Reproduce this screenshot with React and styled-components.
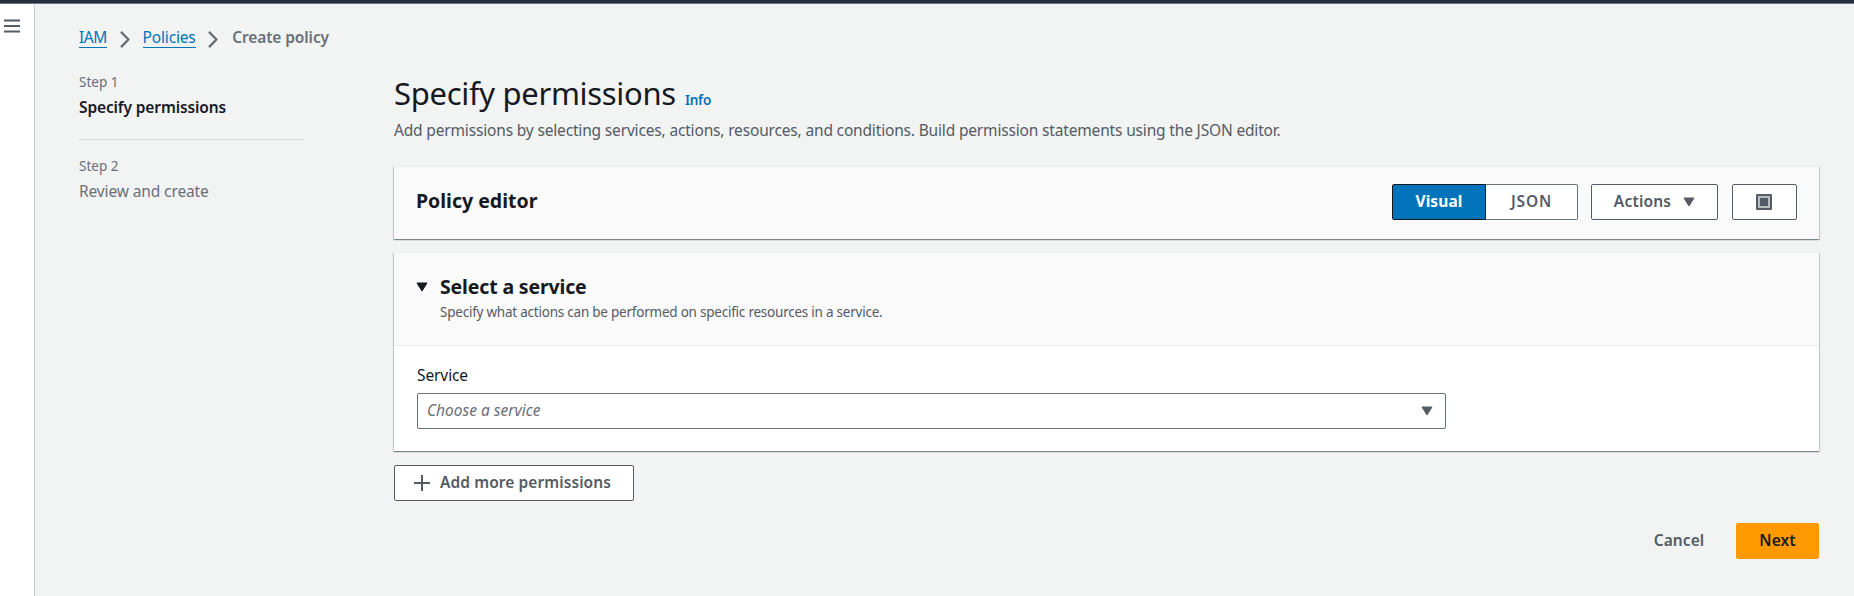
import React from 'react';
import styled, { createGlobalStyle } from 'styled-components';

const GlobalStyle = createGlobalStyle`
  * { box-sizing: border-box; }
  body {
    margin: 0;
    background: #f2f3f3;
    color: #16191f;
    font-family: "Noto Sans", "Open Sans", sans-serif;
    font-size: 15.5px;
    line-height: 22px;
  }
  h1, h2, p, ol { margin: 0; padding: 0; }
  button { font-family: inherit; }
`;

const Page = styled.div`
  display: flex;
  flex-direction: column;
  height: 596px;
  overflow: hidden;
`;

const TopBar = styled.div`
  flex: none;
  height: 4px;
  background: #232f3e;
  border-bottom: 1px solid #6b7681;
`;

const Shell = styled.div`
  flex: 1;
  display: flex;
  min-height: 0;
`;

const NavRail = styled.nav`
  flex: none;
  width: 35px;
  padding: 15px 0 0 4px;
  background: #fff;
  border-right: 1px solid #c3cbcb;
`;

const MenuButton = styled.button`
  display: block;
  width: 16px;
  padding: 0;
  border: 0;
  background: none;
  svg { display: block; }
`;

const Content = styled.div`
  flex: 1;
  display: flex;
  flex-direction: column;
  padding: 23px 35px 0 44px;
`;

const Breadcrumbs = styled.nav`
  display: flex;
  align-items: flex-start;
  height: 21px;
  line-height: 20px;
  svg { flex: none; margin: 4px 13px 0 12.5px; }
`;

const Crumb = styled.a`
  height: 21px;
  color: #0073bb;
  border-bottom: 1px solid #0073bb;
  letter-spacing: ${(p) => p.$spacing};
`;

const CurrentCrumb = styled.span`
  margin-left: 1px;
  color: #687078;
  font-weight: 600;
  letter-spacing: -0.1px;
`;

const Columns = styled.div`
  display: grid;
  grid-template-columns: 225px 1fr;
  column-gap: 90px;
  margin-top: 23px;
`;

const Steps = styled.ol`
  list-style: none;
`;

const Step = styled.li`
  display: flex;
  flex-direction: column;
  gap: 3px;
  & + & {
    margin-top: 21px;
    padding-top: 15px;
    border-top: 1px solid #d5dbdb;
  }
`;

const StepNumber = styled.span`
  color: #687078;
  font-size: 13.5px;
`;

const StepTitle = styled.span`
  color: ${(p) => (p.$active ? '#16191f' : '#687078')};
  font-weight: ${(p) => (p.$active ? 600 : 400)};
  letter-spacing: -0.12px;
`;

const Main = styled.main`
  display: flex;
  flex-direction: column;
  gap: 14px;
`;

const PageHeader = styled.header`
  padding: 2px 0 12px;
`;

const TitleRow = styled.div`
  display: flex;
  align-items: baseline;
  gap: 9px;
  height: 46px;
`;

const PageTitle = styled.h1`
  font-size: 31px;
  line-height: 40px;
  font-weight: 400;
  letter-spacing: -0.31px;
`;

const InfoLink = styled.a`
  color: #0073bb;
  font-size: 13.5px;
  font-weight: 600;
  letter-spacing: -0.2px;
`;

const Description = styled.p`
  color: #545b64;
  letter-spacing: -0.167px;
`;

const Panel = styled.section`
  background: #fff;
  border-top: 1px solid #eaeded;
  margin-top: -1px;
  box-shadow:
    0 1px 1px 0 rgba(0, 28, 36, 0.3),
    1px 1px 1px 0 rgba(0, 28, 36, 0.15),
    -1px 1px 1px 0 rgba(0, 28, 36, 0.15);
`;

const EditorBar = styled.div`
  display: flex;
  justify-content: space-between;
  align-items: flex-start;
  height: 72px;
  padding: 17px 22px 0 22px;
  background: #fafafa;
`;

const SectionTitle = styled.h2`
  font-size: 19.5px;
  line-height: 28px;
  font-weight: 700;
  letter-spacing: ${(p) => p.$spacing};
  padding-top: ${(p) => p.$drop || 0};
`;

const Controls = styled.div`
  display: flex;
  gap: 14px;
`;

const Segments = styled.div`
  display: flex;
  margin-right: -1px;
`;

const Segment = styled.button`
  width: ${(p) => p.$width};
  height: 36px;
  padding: 0 0 2px;
  font-size: 15.5px;
  font-weight: ${(p) => (p.$selected ? 700 : 600)};
  letter-spacing: ${(p) => p.$spacing};
  color: ${(p) => (p.$selected ? '#fff' : '#545b64')};
  background: ${(p) => (p.$selected ? '#0073bb' : '#fff')};
  border: 1px solid ${(p) => (p.$selected ? '#16191f' : '#687078')};
  border-radius: ${(p) => (p.$selected ? '2px 0 0 2px' : '0 2px 2px 0')};
  border-left-width: ${(p) => (p.$selected ? '1px' : 0)};
`;

const Button = styled.button`
  display: flex;
  align-items: center;
  justify-content: center;
  gap: ${(p) => p.$gap || 0};
  width: ${(p) => p.$width};
  height: 36px;
  padding: 0 ${(p) => p.$shift || 0} 0 0;
  font-size: 15.5px;
  line-height: 22px;
  font-weight: 600;
  letter-spacing: 0.08px;
  color: ${(p) => (p.$variant === 'primary' ? '#16191f' : '#545b64')};
  background: ${(p) => ({ primary: '#ff9900', link: 'transparent' }[p.$variant] || '#fff')};
  border: 1px solid ${(p) => ({ primary: '#ff9900', link: 'transparent' }[p.$variant] || '#545b64')};
  border-radius: 2px;
`;

const ButtonLabel = styled.span`
  padding-bottom: 2px;
  letter-spacing: ${(p) => p.$spacing || 'inherit'};
`;

const ServiceHeader = styled.div`
  display: flex;
  gap: 12px;
  height: 92px;
  padding: 20px 22px 0;
  background: #fafafa;
  svg { flex: none; margin-top: 9px; }
`;

const ServiceHint = styled.p`
  color: #545b64;
  font-size: 13.5px;
  letter-spacing: -0.23px;
`;

const ServiceBody = styled.div`
  display: flex;
  flex-direction: column;
  gap: 7px;
  height: 106px;
  padding: 18px 23px 0;
  border-top: 1px solid #eaeded;
`;

const Label = styled.span`
  letter-spacing: -0.1px;
`;

const Select = styled.div`
  display: flex;
  align-items: center;
  justify-content: space-between;
  width: 1029px;
  height: 36px;
  padding: 0 12px 0 9px;
  border: 1px solid #687078;
  border-radius: 2px;
`;

const Placeholder = styled.span`
  padding-bottom: 2px;
  color: #687078;
  font-style: italic;
`;

const Footer = styled.footer`
  display: flex;
  justify-content: flex-end;
  gap: 10px;
  margin-top: 8px;
`;

const Chevron = () => (
  <svg width="10" height="17" viewBox="0 0 10 17" fill="none" stroke="#687078" strokeWidth="2.4">
    <path d="M1 0.8L8.4 8.5L1 16.2" />
  </svg>
);

const Caret = ({ color = '#545b64' }) => (
  <svg width="12" height="10" viewBox="0 0 12 10" fill={color} stroke={color} strokeLinejoin="round">
    <path d="M1 1H11L6 9Z" />
  </svg>
);

const MenuIcon = () => (
  <svg width="16" height="14" viewBox="0 0 16 14" stroke="#545b64" strokeWidth="2.2">
    <path d="M0 1.5H16M0 7H16M0 12.5H16" />
  </svg>
);

const PlusIcon = () => (
  <svg width="16" height="16" viewBox="0 0 16 16" stroke="#545b64" strokeWidth="2">
    <path d="M8 0V16M0 8H16" />
  </svg>
);

const PanelIcon = () => (
  <svg width="16" height="16" viewBox="0 0 16 16">
    <rect width="16" height="16" rx="1" fill="#545b64" />
    <rect x="2" y="2" width="12" height="12" fill="#b9bdc1" />
    <rect x="4" y="4" width="8" height="8" fill="#545b64" />
  </svg>
);

export default function App() {
  return (
    <Page>
      <GlobalStyle />
      <TopBar />
      <Shell>
        <NavRail>
          <MenuButton aria-label="Open navigation">
            <MenuIcon />
          </MenuButton>
        </NavRail>
        <Content>
          <Breadcrumbs>
            <Crumb $spacing="-0.4px">IAM</Crumb>
            <Chevron />
            <Crumb $spacing="-0.16px">Policies</Crumb>
            <Chevron />
            <CurrentCrumb>Create policy</CurrentCrumb>
          </Breadcrumbs>
          <Columns>
            <Steps>
              <Step>
                <StepNumber>Step 1</StepNumber>
                <StepTitle $active>Specify permissions</StepTitle>
              </Step>
              <Step>
                <StepNumber>Step 2</StepNumber>
                <StepTitle>Review and create</StepTitle>
              </Step>
            </Steps>
            <Main>
              <PageHeader>
                <TitleRow>
                  <PageTitle>Specify permissions</PageTitle>
                  <InfoLink>Info</InfoLink>
                </TitleRow>
                <Description>
                  Add permissions by selecting services, actions, resources, and conditions. Build
                  permission statements using the JSON editor.
                </Description>
              </PageHeader>
              <Panel>
                <EditorBar>
                  <SectionTitle $spacing="0px" $drop="3px">Policy editor</SectionTitle>
                  <Controls>
                    <Segments>
                      <Segment $selected $width="94px" $spacing="0.1px">Visual</Segment>
                      <Segment $width="92px" $spacing="0.8px">JSON</Segment>
                    </Segments>
                    <Button $width="127px" $gap="12px">
                      <ButtonLabel $spacing="0.2px">Actions</ButtonLabel>
                      <Caret />
                    </Button>
                    <Button $width="65px" $shift="1px" aria-label="Toggle panel">
                      <PanelIcon />
                    </Button>
                  </Controls>
                </EditorBar>
              </Panel>
              <Panel>
                <ServiceHeader>
                  <Caret color="#16191f" />
                  <div>
                    <SectionTitle $spacing="-0.15px">Select a service</SectionTitle>
                    <ServiceHint>
                      Specify what actions can be performed on specific resources in a service.
                    </ServiceHint>
                  </div>
                </ServiceHeader>
                <ServiceBody>
                  <Label>Service</Label>
                  <Select>
                    <Placeholder>Choose a service</Placeholder>
                    <Caret />
                  </Select>
                </ServiceBody>
              </Panel>
              <Button $width="240px" $gap="10px" $shift="3px">
                <PlusIcon />
                <ButtonLabel>Add more permissions</ButtonLabel>
              </Button>
              <Footer>
                <Button $variant="link" $width="94px">
                  <ButtonLabel>Cancel</ButtonLabel>
                </Button>
                <Button $variant="primary" $width="83px">
                  <ButtonLabel>Next</ButtonLabel>
                </Button>
              </Footer>
            </Main>
          </Columns>
        </Content>
      </Shell>
    </Page>
  );
}
